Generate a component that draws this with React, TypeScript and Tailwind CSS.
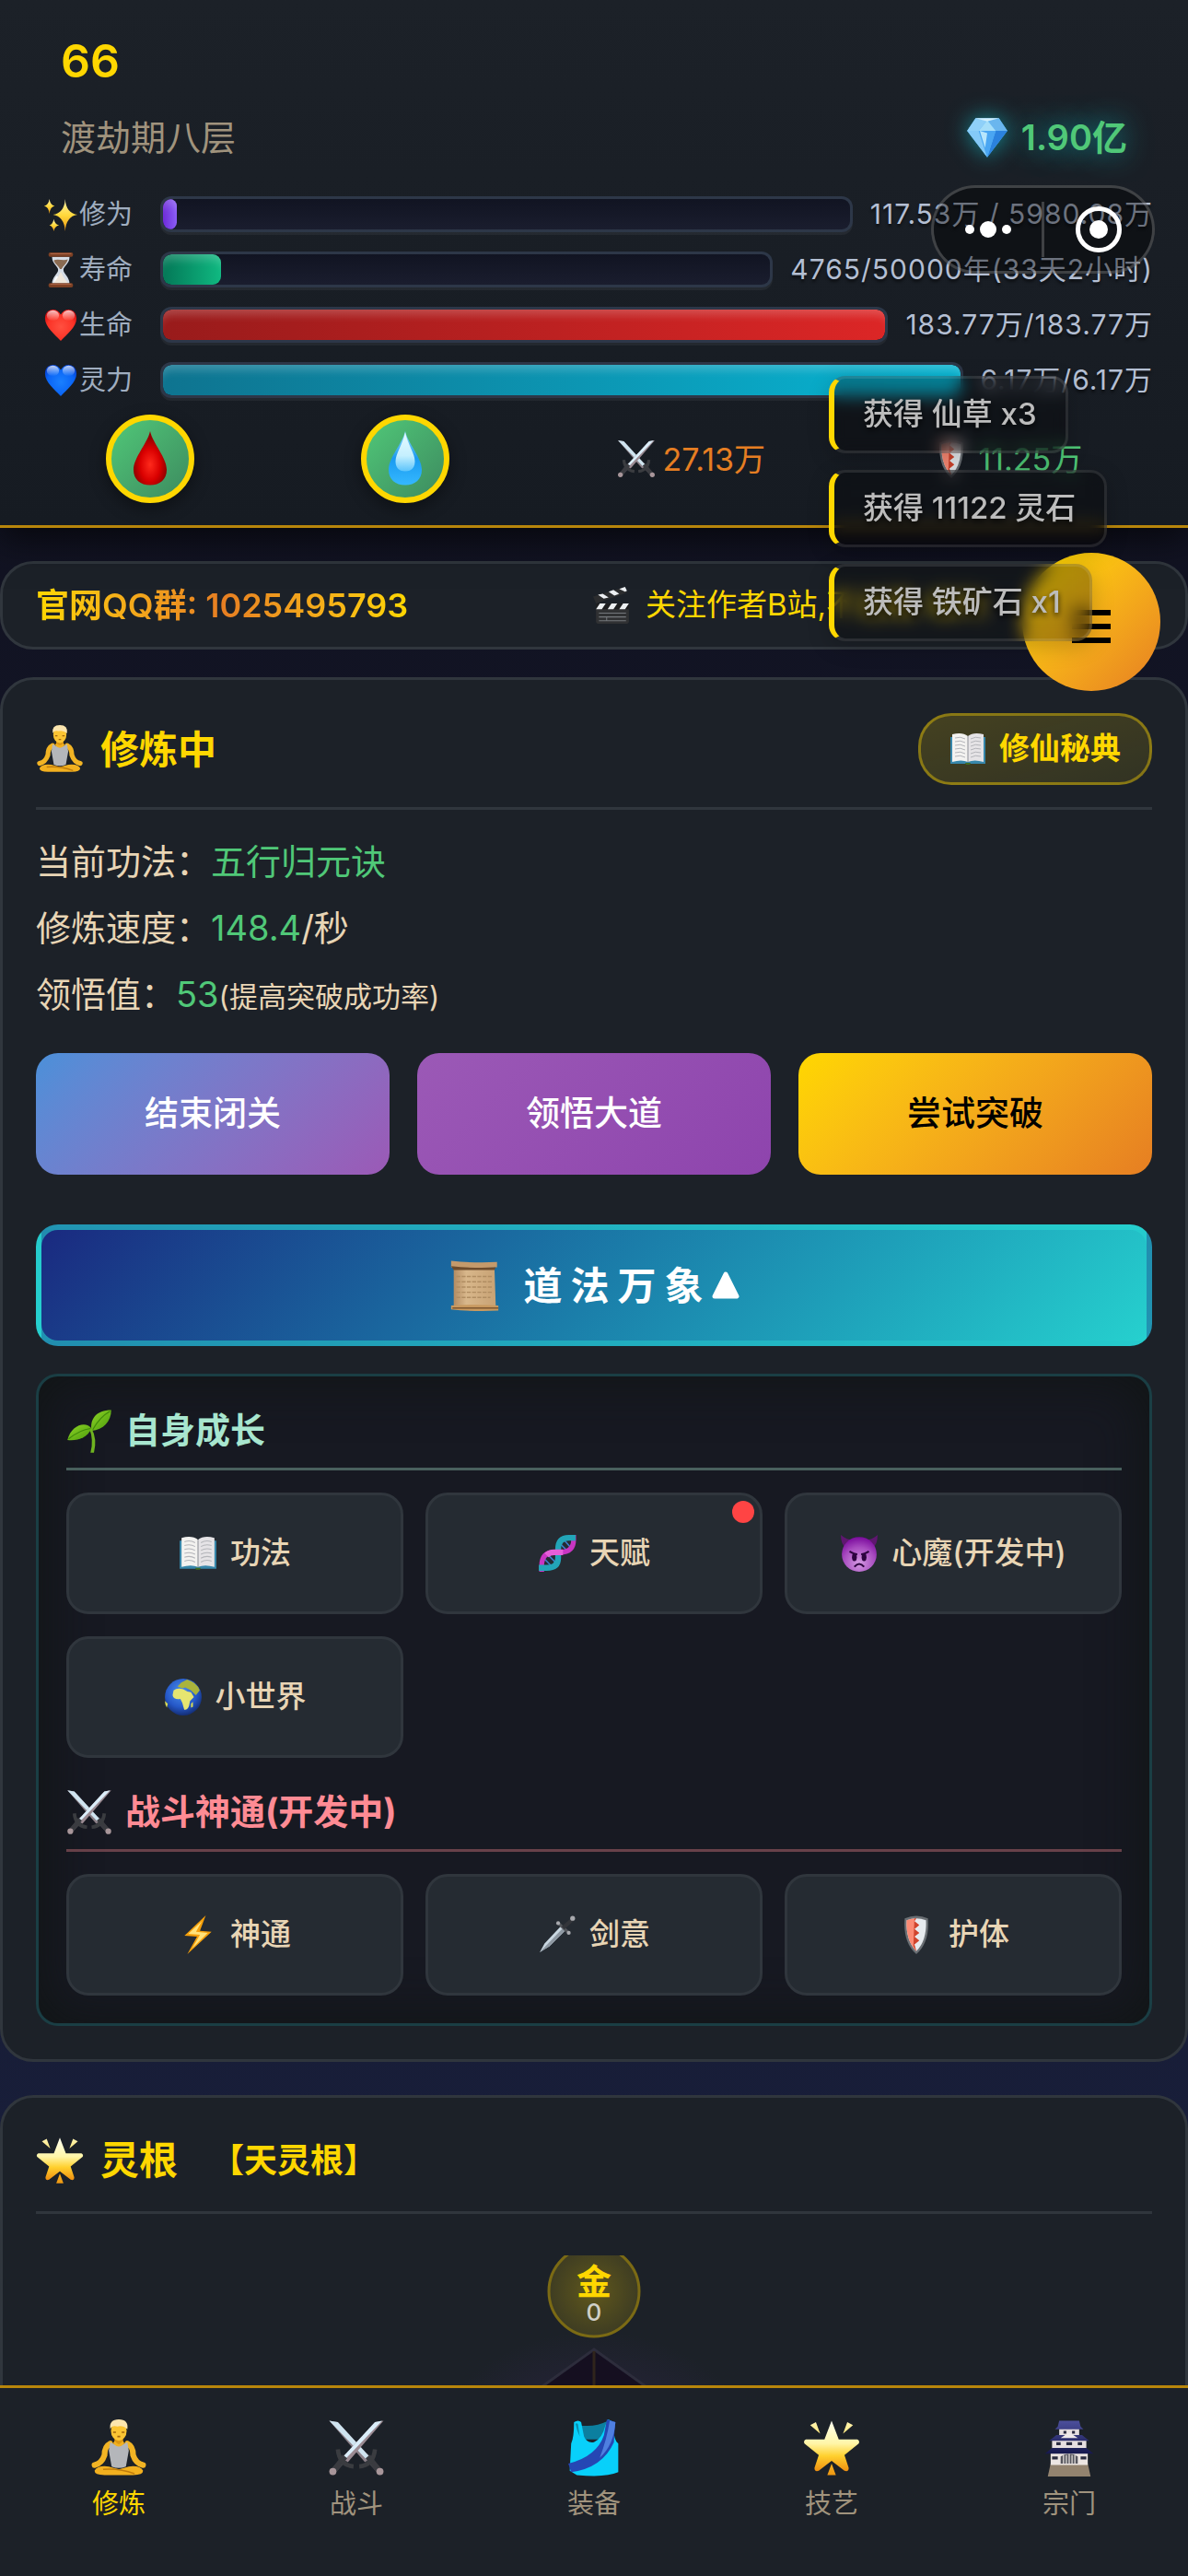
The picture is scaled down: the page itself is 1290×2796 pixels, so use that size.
import React from 'react';

type IconName =
  | 'sparkles' | 'hourglass' | 'redHeart' | 'blueHeart' | 'blood' | 'water' | 'gem'
  | 'swords' | 'shield' | 'clapper' | 'lotus' | 'book' | 'scroll' | 'seedling'
  | 'dna' | 'devil' | 'globe' | 'bolt' | 'dagger' | 'star' | 'vest' | 'castle';

const HEART = 'M20 38C13 30 2 22 2 12C2 6 6 2 11 2C15 2 18 4 20 8C22 4 25 2 29 2C34 2 38 6 38 12C38 22 27 30 20 38Z';
const DROP = 'M20 0C22 9 32 19 32 28C32 35 27 39 20 39C13 39 8 35 8 28C8 19 18 9 20 0Z';

/** Shared gradients, mounted once at the top of the page. */
const IconDefs: React.FC = () => (
  <svg width="0" height="0" className="absolute" aria-hidden="true">
    <defs>
      <radialGradient id="g-red" cx="50%" cy="55%" r="60%">
        <stop offset="0" stopColor="#ff5040" />
        <stop offset="0.7" stopColor="#fb3226" />
        <stop offset="1" stopColor="#d40f10" />
      </radialGradient>
      <radialGradient id="g-blue" cx="50%" cy="55%" r="60%">
        <stop offset="0" stopColor="#1a80ff" />
        <stop offset="0.7" stopColor="#0a64f5" />
        <stop offset="1" stopColor="#0440cf" />
      </radialGradient>
      <linearGradient id="g-gloss" x1="0" y1="0" x2="0" y2="1">
        <stop offset="0" stopColor="#fff" stopOpacity="0.75" />
        <stop offset="1" stopColor="#fff" stopOpacity="0" />
      </linearGradient>
      <radialGradient id="g-blood" cx="50%" cy="62%" r="50%">
        <stop offset="0" stopColor="#ff2a1c" />
        <stop offset="0.6" stopColor="#d90000" />
        <stop offset="1" stopColor="#930000" />
      </radialGradient>
      <linearGradient id="g-water" x1="0" y1="0" x2="0" y2="1">
        <stop offset="0" stopColor="#8fdcfb" />
        <stop offset="0.5" stopColor="#1a9af0" />
        <stop offset="1" stopColor="#35b8ff" />
      </linearGradient>
      <linearGradient id="g-shine" x1="0" y1="0" x2="0" y2="1">
        <stop offset="0" stopColor="#e8fbff" />
        <stop offset="0.6" stopColor="#c4effe" />
        <stop offset="1" stopColor="#5cc4fb" />
      </linearGradient>
      <linearGradient id="g-gold" x1="0" y1="0" x2="0" y2="1">
        <stop offset="0" stopColor="#fff3b0" />
        <stop offset="0.5" stopColor="#ffd93c" />
        <stop offset="1" stopColor="#ee9712" />
      </linearGradient>
      <linearGradient id="g-star" x1="0" y1="0" x2="0" y2="1">
        <stop offset="0" stopColor="#fffff0" />
        <stop offset="0.45" stopColor="#fff6a8" />
        <stop offset="0.7" stopColor="#ffd02e" />
        <stop offset="1" stopColor="#ee8f10" />
      </linearGradient>
      <linearGradient id="g-blade" x1="0" y1="0" x2="1" y2="1">
        <stop offset="0" stopColor="#e4f2fa" />
        <stop offset="1" stopColor="#aab8c4" />
      </linearGradient>
      <radialGradient id="g-devil" cx="50%" cy="75%" r="75%">
        <stop offset="0" stopColor="#d49ae2" />
        <stop offset="0.6" stopColor="#a84cc0" />
        <stop offset="1" stopColor="#7a0a9c" />
      </radialGradient>
      <radialGradient id="g-globe" cx="45%" cy="35%" r="65%">
        <stop offset="0" stopColor="#4d92ee" />
        <stop offset="0.65" stopColor="#2558c8" />
        <stop offset="1" stopColor="#142f78" />
      </radialGradient>
      <linearGradient id="g-scroll" x1="0" y1="0" x2="1" y2="0">
        <stop offset="0" stopColor="#b38c63" />
        <stop offset="0.3" stopColor="#d8b78b" />
        <stop offset="1" stopColor="#c8a274" />
      </linearGradient>
      <linearGradient id="g-leaf" x1="0" y1="0" x2="1" y2="1">
        <stop offset="0" stopColor="#8ed426" />
        <stop offset="1" stopColor="#4b9c0c" />
      </linearGradient>
      <linearGradient id="g-roof" x1="0" y1="0" x2="0" y2="1">
        <stop offset="0" stopColor="#4c4f9c" />
        <stop offset="1" stopColor="#16184e" />
      </linearGradient>
    </defs>
  </svg>
);

const art: Record<IconName, React.ReactNode> = {
  sparkles: (
    <g fill="url(#g-gold)">
      <path d="M25 2Q26 18 39 20Q26 22 25 39Q24 22 11 20Q24 18 25 2Z" />
      <path d="M7 2Q8 9 13 10Q8 11 7 19Q6 11 1 10Q6 9 7 2Z" />
      <path d="M12 25Q13 31 18 32Q13 33 12 39Q11 33 7 32Q11 31 12 25Z" />
    </g>
  ),
  hourglass: (
    <g>
      <path d="M10 5H30C30 13 23 16 23 20C23 24 30 28 30 36H10C10 28 17 24 17 20C17 16 10 13 10 5Z" fill="#d5dce6" />
      <path d="M12 9C17 7 23 10 28 8C27 13 22 16 21 19H19C18 16 13 13 12 9Z" fill="#8a6b52" />
      <path d="M20 22L23 28L28 35H12L17 28Z" fill="#efe6da" />
      <path d="M15 27C13 30 12 33 12 35L17 28Z" fill="#fff" />
      <rect x="6" y="0" width="28" height="5" rx="2" fill="#7c4024" />
      <rect x="6" y="35" width="28" height="5" rx="2" fill="#7c4024" />
      <rect x="8" y="1" width="24" height="1" fill="#b2694a" />
      <rect x="8" y="36" width="24" height="1" fill="#b2694a" />
    </g>
  ),
  redHeart: (
    <g>
      <path d={HEART} fill="url(#g-red)" />
      <ellipse cx="11" cy="9" rx="7" ry="6" fill="url(#g-gloss)" />
      <ellipse cx="29" cy="9" rx="7" ry="6" fill="url(#g-gloss)" />
    </g>
  ),
  blueHeart: (
    <g>
      <path d={HEART} fill="url(#g-blue)" />
      <ellipse cx="11" cy="9" rx="7" ry="6" fill="url(#g-gloss)" />
      <ellipse cx="29" cy="9" rx="7" ry="6" fill="url(#g-gloss)" />
    </g>
  ),
  blood: <path d={DROP} fill="url(#g-blood)" />,
  water: (
    <g>
      <path d={DROP} fill="url(#g-water)" />
      <path d="M20 1C22 10 27 16 27 22C27 27 24 29 20 29C16 29 13 27 13 22C13 16 18 10 20 1Z" fill="url(#g-shine)" />
    </g>
  ),
  gem: (
    <g>
      <path d="M9 2H31L39 14L20 39L1 14Z" fill="#54b4f4" />
      <path d="M9 2L20 4L12 14H1Z" fill="#8fd0f8" />
      <path d="M31 2L20 4L28 14H39Z" fill="#6ab6ee" />
      <path d="M20 4L12 14H28Z" fill="#a5def9" />
      <path d="M9 2H31L20 5Z" fill="#d3effc" />
      <path d="M1 14H12L20 39Z" fill="#84c9f7" />
      <path d="M39 14H28L20 39Z" fill="#2b82de" />
      <path d="M12 14H28L20 39Z" fill="#4aa6f2" />
      <path d="M13 14L20 16L18 30Z" fill="#b8e6fc" />
    </g>
  ),
  swords: (
    <g>
      <path d="M14 25L4 36M26 25L36 36" stroke="#45454c" strokeWidth="4" />
      <path d="M1 1L7 2L30 27L26 30Z" fill="#8c8088" />
      <path d="M1 1L7 2L29 26L27 28Z" fill="#cfe4f0" />
      <path d="M39 1L33 2L10 27L14 30Z" fill="#9a8a92" />
      <path d="M38 1L33 2L10 27L12 28Z" fill="#dbeefa" />
      <path d="M12 26L4 36M28 26L36 36" stroke="#3a3b40" strokeWidth="4" />
      <path d="M7 21Q8 32 18 33" fill="none" stroke="#3a3c40" strokeWidth="3" />
      <path d="M33 21Q32 32 22 33" fill="none" stroke="#3a3c40" strokeWidth="3" />
      <circle cx="3.500" cy="36.500" r="2.500" fill="#a8969a" />
      <circle cx="36.500" cy="36.500" r="2.500" fill="#a8969a" />
    </g>
  ),
  shield: (
    <g>
      <path d="M8 3Q20 -2 32 3Q34 28 20 40Q6 28 8 3Z" fill="#6a6f74" />
      <path d="M10 5Q20 1 30 5Q31 26 20 37Q9 26 10 5Z" fill="#e6eaee" />
      <path d="M10 5Q15 3 20 3L18 6L23 10L18 14L23 18L18 22L23 26L18 30L20 37Q9 26 10 5Z" fill="#fb8a74" />
      <path d="M18 3L20 3L18 6L23 10L18 14L23 18L18 22L23 26L18 30L20 37L17 32Z" fill="#cf442e" />
    </g>
  ),
  clapper: (
    <g>
      <rect x="4" y="18" width="34" height="21" rx="2" fill="#303133" />
      <path d="M1 11L34 1L36 7L4 18Z" fill="#2b2c2e" />
      <path d="M6 9L12 13L17 12L11 8ZM17 6L23 10L28 8L22 4ZM28 3L34 6L36 5L34 1Z" fill="#eceff2" />
      <path d="M4 18H38V24H4Z" fill="#1d1e20" />
      <path d="M8 18H14L10 24H4ZM20 18H26L22 24H16ZM32 18H38L34 24H28Z" fill="#eceff2" />
      <path d="M7 28H35M7 32H35M7 36H35M15 32V36" stroke="#74787c" strokeWidth="1" />
    </g>
  ),
  lotus: (
    <g>
      <path d="M14 17Q10 19 10 25Q8 31 3 32M26 17Q30 19 30 25Q32 31 37 32" fill="none" stroke="#f2b424" strokeWidth="4" strokeLinecap="round" />
      <path d="M17 11H23V17H17Z" fill="#dd9712" />
      <path d="M3 36Q5 32 13 33L20 35L27 33Q35 32 37 36Q37 39 30 39H10Q3 39 3 36Z" fill="#f2b01f" />
      <path d="M9 35Q20 34 31 38" fill="none" stroke="#c07c0c" strokeWidth="1" />
      <path d="M14 16Q20 20 26 16L27 22L25 33Q20 35 15 33L13 22Z" fill="#b4b6ba" />
      <path d="M17 15Q20 19 23 15L24 17Q20 21 16 17Z" fill="#f2b01f" />
      <ellipse cx="20" cy="8" rx="5.500" ry="7" fill="#fac433" />
      <path d="M14 7Q13 0 20 0Q27 0 26 7Q23 4 19 5Q15 4 14 7Z" fill="#fbe5ae" />
      <path d="M16 9H18M22 9H24M19 12H21" stroke="#a3660c" strokeWidth="1" />
    </g>
  ),
  book: (
    <g>
      <path d="M1 7H39V36H1Z" fill="#3787ab" />
      <path d="M3 4Q14 1 20 6V34Q13 31 3 34Z" fill="#f3f2f0" />
      <path d="M37 4Q26 1 20 6V34Q27 31 37 34Z" fill="#e5e3e6" />
      <path d="M6 8Q12 6 17 9M6 12Q12 10 17 13M6 16Q12 14 17 17M6 20Q12 18 17 21M6 24Q12 22 17 25M6 28Q12 26 17 29M34 8Q28 6 23 9M34 12Q28 10 23 13M34 16Q28 14 23 17M34 20Q28 18 23 21M34 24Q28 22 23 25M34 28Q28 26 23 29" fill="none" stroke="#b4b5ba" strokeWidth="1" />
      <path d="M20 6V34" stroke="#8d8f96" strokeWidth="1" />
      <path d="M17 35H23L22 37H18Z" fill="#3f6b20" />
    </g>
  ),
  scroll: (
    <g>
      <path d="M4 6H35L36 35H4Z" fill="url(#g-scroll)" />
      <path d="M6 13H33M6 17H33M6 21H33M6 25H33M6 29H32" stroke="#b08d62" strokeWidth="1" strokeDasharray="3 1" />
      <path d="M2 1Q20 3 37 2V6Q20 7 2 6Z" fill="#c49a6b" />
      <path d="M2 5Q20 7 36 6L35 8Q20 8 4 8Z" fill="#6e4c2c" />
      <path d="M2 35Q20 34 38 35V39Q20 40 2 38Z" fill="#c8995f" />
      <path d="M3 37H38" stroke="#7c5630" strokeWidth="1" />
    </g>
  ),
  seedling: (
    <g>
      <path d="M22 18Q27 27 24 39H21Q24 28 20 18Z" fill="#6fb320" />
      <path d="M22 20C20 10 26 2 39 2C39 12 32 19 22 20Z" fill="url(#g-leaf)" />
      <path d="M22 18C17 11 4 15 1 28C10 29 18 26 22 18Z" fill="url(#g-leaf)" />
      <path d="M23 19Q29 8 38 3M21 18Q12 19 2 27" fill="none" stroke="#3f8a0a" strokeWidth="1" />
    </g>
  ),
  dna: (
    <g fill="none">
      <path d="M7 26L15 34M11 22L19 30M23 10L31 18M27 6L34 14" stroke="#3f7fd0" strokeWidth="1.500" />
      <path d="M4 39V33Q4 19 17 19H23Q37 19 37 6V1" stroke="#c935c2" strokeWidth="5" />
      <path d="M1 35H9Q21 35 21 25V16Q21 4 32 4H39" stroke="#22a5b8" strokeWidth="6" />
      <path d="M9 22Q12 19 17 19H26" stroke="#e65fd8" strokeWidth="6" />
    </g>
  ),
  devil: (
    <g>
      <path d="M1 1Q1 12 7 15L16 7Q6 6 1 1ZM39 1Q39 12 33 15L24 7Q34 6 39 1Z" fill="#5f1670" />
      <circle cx="20" cy="21" r="18" fill="url(#g-devil)" />
      <path d="M10 18Q15 21 18 21M30 18Q25 21 22 21" fill="none" stroke="#2e0440" strokeWidth="2" />
      <ellipse cx="15" cy="24" rx="2.500" ry="4" fill="#2e0440" />
      <ellipse cx="25" cy="24" rx="2.500" ry="4" fill="#2e0440" />
      <path d="M15 34Q20 28 25 34" fill="none" stroke="#2e0440" strokeWidth="2" />
    </g>
  ),
  globe: (
    <g>
      <circle cx="20" cy="20" r="19" fill="url(#g-globe)" />
      <path d="M10 13Q14 10 20 12Q24 15 28 15L31 20L27 24L26 29Q24 34 21 33L19 26L17 22Q10 23 9 18Z" fill="#e6e570" />
      <path d="M14 9L18 5L24 2Q34 5 37 13L33 18L28 13L22 10L19 11Z" fill="#a9b43c" />
      <path d="M1 24L4 27L3 31Q1 28 1 24Z" fill="#d6da55" />
      <path d="M28 27L30 25V30L28 31Z" fill="#d6da55" />
    </g>
  ),
  bolt: (
    <g>
      <path d="M28 0L6 21L19 22L9 40L34 17L22 16Z" fill="#f59f0a" />
      <path d="M24 6L10 19L22 20L14 34L30 18L18 17Z" fill="#ffe27a" />
    </g>
  ),
  dagger: (
    <g>
      <path d="M2 38L7 29L24 11L29 15L12 32Z" fill="url(#g-blade)" />
      <path d="M2 38L26 13L29 15L12 32Z" fill="#8e98a2" />
      <path d="M21 8L32 18" stroke="#54575c" strokeWidth="3" />
      <path d="M26 13L36 4" stroke="#33353a" strokeWidth="4" />
      <circle cx="21" cy="8" r="2" fill="#a8a9ae" />
      <circle cx="32" cy="18" r="2" fill="#a8a9ae" />
      <circle cx="36" cy="3" r="2.500" fill="#a8a9ae" />
    </g>
  ),
  star: (
    <g>
      <path d="M20 1L25 14L38 14Q40 15 39 17L29 25L32 34Q32 37 29 36L20 29L11 36Q8 37 8 34L11 25L1 17Q0 15 2 14L15 14Z" fill="url(#g-star)" />
      <path d="M5 4L9 2L12 10ZM35 4L31 2L28 10ZM20 31L23 39H17Z" fill="url(#g-gold)" />
    </g>
  ),
  vest: (
    <g>
      <path d="M9 4Q20 6 30 1L28 14H11Z" fill="#0c7f9f" />
      <path d="M6 2Q9 0 11 2L13 12Q15 17 20 16Q26 13 28 4L30 0L34 2Q33 14 37 17V37Q28 41 8 39L3 36L4 17Q6 13 6 2Z" fill="#08d0fa" />
      <path d="M29 0L35 2Q34 12 34 16Q26 34 4 37L2 31Q22 26 27 11Z" fill="#2547b4" />
      <path d="M31 1L35 2Q34 18 24 27Q29 14 31 1Z" fill="#4f7fe0" />
      <path d="M7 3Q9 2 9 5L10 12Q8 8 7 3Z" fill="#0a8fae" />
    </g>
  ),
  castle: (
    <g>
      <path d="M7 31H33L35 40H5Z" fill="#93836f" />
      <path d="M7 23H33V32H7Z" fill="#ece5e2" />
      <path d="M8 14H32V22H8Z" fill="#e6dfe0" />
      <path d="M13 6H27V12H13Z" fill="#e6dfe0" />
      <path d="M13 1H27L28 5L30 7H10L12 5ZM11 11H29L34 15H6ZM8 20H32L37 24H3Z" fill="url(#g-roof)" />
      <path d="M14 13L20 9L26 13Z" fill="#efe9e9" />
      <path d="M14 31V26Q20 22 26 26V31Z" fill="#56565e" />
      <path d="M16 25V31M18 25V31M20 24V31M22 25V31M24 25V31" stroke="#c9c5c4" strokeWidth="1" />
      <path d="M11 16H14V18H11ZM18 16H22V18H18ZM26 16H29V18H26ZM8 26H12V28H8ZM28 26H32V28H28ZM16 8H18V10H16ZM22 8H24V10H22Z" fill="#2a2b40" />
    </g>
  ),
};

const Icon: React.FC<{ name: IconName; className: string }> = ({ name, className }) => (
  <svg viewBox="0 0 40 40" className={`shrink-0 ${className}`} aria-hidden="true">
    {art[name]}
  </svg>
);

interface Stat {
  icon: IconName;
  label: string;
  value: string;
  percent: number;
  fill: string;
}

const stats: Stat[] = [
  { icon: 'sparkles', label: '修为', value: '117.53万 / 5980.08万', percent: 2, fill: 'from-[#6d28d9] to-[#8b5cf6]' },
  { icon: 'hourglass', label: '寿命', value: '4765/50000年(33天2小时)', percent: 9.5, fill: 'from-[#047857] to-[#10b981]' },
  { icon: 'redHeart', label: '生命', value: '183.77万/183.77万', percent: 100, fill: 'from-[#991b1b] to-[#dc2626]' },
  { icon: 'blueHeart', label: '灵力', value: '6.17万/6.17万', percent: 100, fill: 'from-[#0e7490] to-[#06b6d4]' },
];

interface Skill {
  icon: IconName;
  label: string;
  dot?: boolean;
}

const growthSkills: Skill[] = [
  { icon: 'book', label: '功法' },
  { icon: 'dna', label: '天赋', dot: true },
  { icon: 'devil', label: '心魔(开发中)' },
  { icon: 'globe', label: '小世界' },
];

const battleSkills: Skill[] = [
  { icon: 'bolt', label: '神通' },
  { icon: 'dagger', label: '剑意' },
  { icon: 'shield', label: '护体' },
];

const tabs: { icon: IconName; label: string }[] = [
  { icon: 'lotus', label: '修炼' },
  { icon: 'swords', label: '战斗' },
  { icon: 'vest', label: '装备' },
  { icon: 'star', label: '技艺' },
  { icon: 'castle', label: '宗门' },
];

const toasts = ['获得 仙草 x3', '获得 11122 灵石', '获得 铁矿石 x1'];

const StatBar: React.FC<{ stat: Stat }> = ({ stat }) => (
  <div className="flex items-center h-[39px]">
    <div className="w-[136px] shrink-0 flex items-center gap-px pl-[9px] text-[29px] text-[#a0aec0]">
      <Icon name={stat.icon} className="size-[38px]" />
      {stat.label}
    </div>
    <div className="relative flex-1 h-[39px] p-[3px] rounded-[12px] bg-[#2d3748] shadow-[0_3px_0_rgba(255,255,255,0.05)]">
      <div className="h-full rounded-[9px] overflow-hidden bg-linear-to-b from-[#111422] to-[#1a1d2e]">
        <div
          className={`h-full rounded-[9px] bg-linear-to-r shadow-[inset_0_12px_10px_-6px_rgba(255,255,255,0.2)] ${stat.fill}`}
          style={{ width: `${stat.percent}%` }}
        />
      </div>
    </div>
    <span className="pl-[19px] text-[30px] tracking-[1px] text-[#b4bfd3] whitespace-nowrap [text-shadow:0_3px_3px_rgba(0,0,0,0.5)]">
      {stat.value}
    </span>
  </div>
);

const Potion: React.FC<{ icon: IconName; label: string }> = ({ icon, label }) => (
  <button
    type="button"
    aria-label={label}
    className="size-24 rounded-full border-[6px] border-[#ffd700] bg-linear-to-br from-[#50c878] to-[#3d8b5f] flex items-center justify-center shadow-[0_6px_18px_rgba(0,0,0,0.4)]"
  >
    <Icon name={icon} className="size-[60px]" />
  </button>
);

const Header: React.FC = () => (
  <header className="relative z-10 shrink-0 pt-9 pb-6 border-b-[3px] border-[#b8860b] bg-linear-to-b from-[#1c2128] to-[#161b22] shadow-[0_12px_36px_rgba(0,0,0,0.6)]">
    <div className="px-[66px]">
      <h1 className="h-[60px] leading-[60px] text-[50px] font-semibold text-[#ffd700]">66</h1>
      <div className="mt-[26px] h-[54px] flex items-center justify-between">
        <span className="text-[38px] text-[#a0937d]">渡劫期八层</span>
        <span className="flex items-center gap-[14px] text-[38px] font-semibold text-[#50c878] [text-shadow:0_0_30px_#10a0a8]">
          <Icon name="gem" className="size-[46px] drop-shadow-[0_0_12px_rgba(20,170,180,0.8)]" />
          1.90亿
        </span>
      </div>
    </div>
    <div className="mt-[37px] px-[38px] flex flex-col gap-[21px]">
      {stats.map(stat => (
        <StatBar key={stat.label} stat={stat} />
      ))}
    </div>
    <div className="mt-[18px] px-6 flex items-center justify-around">
      <Potion icon="blood" label="生命药水" />
      <Potion icon="water" label="灵力药水" />
      <span className="flex items-center gap-2 text-[34px] text-[#e67e22]">
        <Icon name="swords" className="size-[42px]" />
        27.13万
      </span>
      <span className="flex items-center gap-2 text-[34px] text-[#50c878]">
        <Icon name="shield" className="size-[42px]" />
        11.25万
      </span>
    </div>
  </header>
);

const Announcement: React.FC = () => (
  <section className="shrink-0 h-24 px-9 rounded-[36px] border-[3px] border-[#30363d] bg-[#1c2128] flex items-center overflow-hidden whitespace-nowrap">
    <p className="w-[604px] shrink-0 text-[36px] font-semibold">
      <span className="bg-linear-to-r from-[#ffd700] via-[#e67e22] to-[#ffd700] bg-clip-text text-transparent">
        官网QQ群: 1025495793
      </span>
    </p>
    <p className="flex items-center gap-4 text-[33px] text-[#ffd700]">
      <Icon name="clapper" className="size-[42px]" />
      关注作者B站,不迷路 福利
    </p>
  </section>
);

const SkillGrid: React.FC<{ skills: Skill[] }> = ({ skills }) => (
  <div className="grid grid-cols-3 gap-6">
    {skills.map(skill => (
      <button
        key={skill.label}
        type="button"
        className="relative h-[132px] rounded-[24px] border-[3px] border-[#30363d] bg-[#252b32] flex items-center justify-center gap-[14px] text-[33px] font-medium text-[#e8d5b5]"
      >
        <Icon name={skill.icon} className="size-[42px]" />
        {skill.label}
        {skill.dot && <span className="absolute top-[6px] right-[6px] size-6 rounded-full bg-[#ff4444]" />}
      </button>
    ))}
  </div>
);

const CultivationCard: React.FC = () => (
  <section className="shrink-0 p-9 rounded-[36px] border-[3px] border-[#30363d] bg-[#1c2128]">
    <div className="flex items-center justify-between pb-6 border-b-[3px] border-[#30363d]">
      <h2 className="flex items-center gap-[18px] text-[42px] font-bold text-[#ffd700]">
        <Icon name="lotus" className="size-[52px]" />
        修炼中
      </h2>
      <button
        type="button"
        className="h-[78px] px-[31px] rounded-[36px] border-[3px] border-[#ffd700]/40 bg-linear-to-br from-[#ffd700]/18 to-[#ffd700]/10 flex items-center gap-[14px] text-[33px] font-bold text-[#ffd700]"
      >
        <Icon name="book" className="size-[40px]" />
        修仙秘典
      </button>
    </div>

    <div className="mt-5 mb-7 text-[38px] text-[#e8d5b5]">
      <p className="h-[72px] leading-[72px]">当前功法：<span className="text-[#50c878]">五行归元诀</span></p>
      <p className="h-[72px] leading-[72px]">修炼速度：<span className="text-[#50c878]">148.4</span>/秒</p>
      <p className="h-[72px] leading-[72px]">领悟值：<span className="text-[#50c878]">53</span><span className="text-[31px]">(提高突破成功率)</span></p>
    </div>

    <div className="grid grid-cols-3 gap-[30px] text-[37px] font-medium text-white">
      <button type="button" className="h-[132px] rounded-[24px] bg-linear-135 from-[#4a90d9] to-[#9b59b6]">结束闭关</button>
      <button type="button" className="h-[132px] rounded-[24px] bg-linear-135 from-[#9b59b6] to-[#8e44ad]">领悟大道</button>
      <button type="button" className="h-[132px] rounded-[24px] bg-linear-135 from-[#ffd700] to-[#e67e22] text-black">尝试突破</button>
    </div>

    <button
      type="button"
      className="mt-[54px] w-full h-[132px] rounded-[24px] border-[6px] border-[#26d0ce]/60 bg-linear-135 from-[#1a2980] to-[#26d0ce] flex items-center justify-center text-[42px] font-bold tracking-[9px] text-white"
    >
      <Icon name="scroll" className="size-[57px] mr-6" />
      道法万象
      <svg viewBox="0 0 30 30" className="size-[30px]" aria-hidden="true">
        <path d="M15 3L27 27H3Z" fill="#fff" stroke="#fff" strokeWidth="5" strokeLinejoin="round" />
      </svg>
    </button>

    <div className="mt-[30px] p-[30px] rounded-[24px] border-[3px] border-[#26d0ce]/20 bg-[#171922] shadow-[inset_0_0_60px_rgba(16,20,18,0.9)]">
      <h3 className="h-[72px] pb-3 mb-6 border-b-[3px] border-[#a8e6cf]/35 flex items-center gap-[14px] text-[38px] font-bold text-[#a8e6cf]">
        <Icon name="seedling" className="size-[50px]" />
        自身成长
      </h3>
      <SkillGrid skills={growthSkills} />
      <h3 className="mt-[30px] h-[72px] pb-3 mb-6 border-b-[3px] border-[#ff8b94]/35 flex items-center gap-[14px] text-[38px] font-bold text-[#ff8b94]">
        <Icon name="swords" className="size-[50px]" />
        战斗神通(开发中)
      </h3>
      <SkillGrid skills={battleSkills} />
    </div>
  </section>
);

const RootWheel: React.FC = () => (
  <svg viewBox="0 0 600 420" className="block w-[600px] mx-auto" role="img" aria-label="五行灵根">
    <defs>
      <radialGradient id="w-gold">
        <stop offset="0" stopColor="#ffd700" stopOpacity="0.3" />
        <stop offset="1" stopColor="#ffd700" stopOpacity="0.15" />
      </radialGradient>
      <radialGradient id="w-glow">
        <stop offset="0.6" stopColor="#2a2440" stopOpacity="0.7" />
        <stop offset="1" stopColor="#2a2440" stopOpacity="0" />
      </radialGradient>
    </defs>
    <circle cx="300" cy="290" r="208" fill="url(#w-glow)" />
    <path d="M300 102L490 238L418 462H182L110 238Z" fill="#150f20" stroke="#2d2d3c" strokeWidth="3" />
    <path d="M300 104V420" stroke="#30251c" strokeWidth="3" />
    <circle cx="300" cy="39" r="49" fill="url(#w-gold)" stroke="#7b6a14" strokeWidth="3" />
    <text x="300" y="42" textAnchor="middle" fontSize="38" fontWeight="700" fill="#ffd700">金</text>
    <text x="300" y="71" textAnchor="middle" fontSize="26" fontWeight="500" fill="#d0d0c8">0</text>
  </svg>
);

const RootCard: React.FC = () => (
  <section className="shrink-0 p-9 rounded-[36px] border-[3px] border-[#30363d] bg-[#1c2128]">
    <h2 className="h-[90px] pb-6 border-b-[3px] border-[#30363d] flex items-center text-[42px] font-bold text-[#ffd700]">
      <Icon name="star" className="size-[52px] mr-[18px]" />
      灵根
      <span className="ml-9 text-[36px]">【天灵根】</span>
    </h2>
    <div className="mt-[45px]">
      <RootWheel />
    </div>
  </section>
);

const TabBar: React.FC = () => (
  <nav className="relative z-10 shrink-0 h-[207px] pt-[34px] border-t-[3px] border-[#b8860b] bg-[#1c2128] grid grid-cols-5 items-start">
    {tabs.map((tab, index) => (
      <a
        key={tab.label}
        href={`#${index}`}
        className={`flex flex-col items-center gap-2 text-[29px] leading-[44px] ${index === 0 ? 'text-[#ffd700]' : 'text-[#a0937d]'}`}
      >
        <Icon name={tab.icon} className="size-[62px]" />
        {tab.label}
      </a>
    ))}
  </nav>
);

/** Mini-program capsule: more / close. */
const Capsule: React.FC = () => (
  <div className="absolute z-20 top-[201px] right-[36px] h-24 w-[243px] rounded-full border-[3px] border-white/20 bg-black/40 flex items-center">
    <button type="button" aria-label="更多" className="flex-1 h-full flex items-center justify-center gap-[6px]">
      <span className="size-[10px] rounded-full bg-white" />
      <span className="size-[18px] rounded-full bg-white" />
      <span className="size-[10px] rounded-full bg-white" />
    </button>
    <span className="w-[3px] h-[60px] bg-white/20" />
    <button type="button" aria-label="关闭" className="flex-1 h-full flex items-center justify-center">
      <span className="size-[50px] rounded-full border-[5px] border-white flex items-center justify-center">
        <span className="size-5 rounded-full bg-white" />
      </span>
    </button>
  </div>
);

const App: React.FC = () => (
  <div className="relative h-screen flex flex-col overflow-hidden bg-linear-to-b from-[#0f0f1a] to-[#1a2140] font-[Inter,'Noto_Sans_CJK_SC',sans-serif]">
    <IconDefs />
    <Header />
    <main className="flex-1 min-h-0 overflow-hidden pt-9 flex flex-col">
      <Announcement />
      <div className="mt-[30px] flex flex-col gap-9">
        <CultivationCard />
        <RootCard />
      </div>
    </main>
    <TabBar />

    <button
      type="button"
      aria-label="菜单"
      className="absolute z-20 top-[600px] right-[30px] size-[150px] rounded-full bg-linear-135 from-[#ffd700] from-10% to-[#e67e22] flex flex-col items-center justify-center gap-[9px] pt-[10px]"
    >
      <span className="w-[42px] h-[6px] bg-black" />
      <span className="w-[42px] h-[6px] bg-black" />
      <span className="w-[42px] h-[6px] bg-black" />
    </button>

    <Capsule />

    <div className="absolute z-30 top-[408px] left-[900px] flex flex-col items-start gap-[18px]">
      {toasts.map(toast => (
        <div
          key={toast}
          className="h-[84px] px-[31px] rounded-[18px] border-[3px] border-l-[6px] border-white/10 border-l-[#ffd700] bg-black/30 backdrop-blur-[9px] shadow-[0_6px_24px_rgba(0,0,0,0.2)] flex items-center text-[33px] font-medium text-[#bcbcbc] whitespace-nowrap [text-shadow:0_3px_6px_rgba(0,0,0,0.8)]"
        >
          {toast}
        </div>
      ))}
    </div>
  </div>
);

export default App;
